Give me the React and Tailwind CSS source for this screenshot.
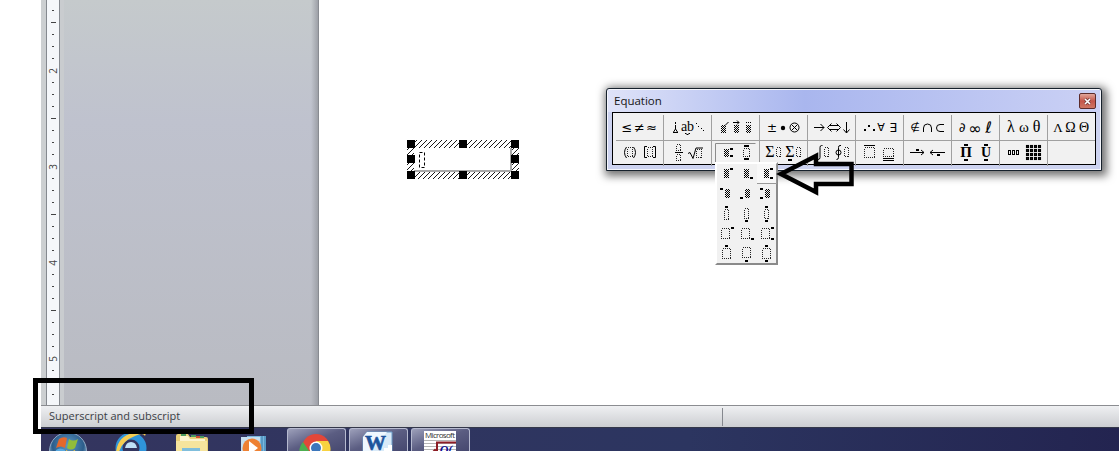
const ticks = Array.from({ length: 34 }, (_, i) => 10 + i * 12);

const mathFont = { fontFamily: '"Liberation Serif", "DejaVu Sans", serif' };
const symFont = { fontFamily: '"DejaVu Sans", sans-serif' };

function Defs() {
  return (
    <svg width="0" height="0" className="absolute">
      <defs>
        <pattern id="checker" width="2" height="2" patternUnits="userSpaceOnUse">
          <rect width="2" height="2" fill="#f0f0f0" />
          <rect width="1" height="1" fill="#000" />
          <rect x="1" y="1" width="1" height="1" fill="#000" />
        </pattern>
        <pattern id="hatch" width="5" height="5" patternUnits="userSpaceOnUse">
          <rect width="5" height="5" fill="#fff" />
          <path d="M-1 1L1 -1M0 5L5 0M4 6L6 4" stroke="#000" strokeWidth="0.9" />
        </pattern>
      </defs>
    </svg>
  );
}

// dotted placeholder slot
function Slot({ x, y, w = 5, h = 9 }) {
  return (
    <rect
      x={x + 0.5}
      y={y + 0.5}
      width={w}
      height={h}
      fill="none"
      stroke="#222"
      strokeDasharray="1 1"
      shapeRendering="crispEdges"
    />
  );
}

function Solid({ x, y, w = 5, h = 8 }) {
  return <rect x={x} y={y} width={w} height={h} fill="url(#checker)" shapeRendering="crispEdges" />;
}

function Dot({ x, y, w = 3, h = 2 }) {
  return <rect x={x} y={y} width={w} height={h} fill="#000" shapeRendering="crispEdges" />;
}

function Sym({ x, y = 17, size = 13, font = symFont, bold, children }) {
  return (
    <text x={x} y={y} fontSize={size} textAnchor="middle" fill="#000" fontWeight={bold ? 700 : 400} style={font}>
      {children}
    </text>
  );
}

function Line({ d, w = 1 }) {
  return <path d={d} fill="none" stroke="#000" strokeWidth={w} />;
}

const topRow = [
  <>
    <Sym x={11}>≤</Sym>
    <Sym x={23.5}>≠</Sym>
    <Sym x={35.5}>≈</Sym>
  </>,
  <>
    <Line d="M11.5 7v2M11.5 10v4M9 17.5h5M9.5 17l2-3l2 3" />
    <Sym x={23.5} y={16} size={14} font={mathFont}>ab</Sym>
    <Line d="M21 18.5h1.5M22.5 19.5h2M24.5 18.5h1.5" />
    <Dot x={32} y={8} w={1} h={1} />
    <Dot x={34} y={11} w={1} h={1} />
    <Dot x={37} y={13} w={1} h={1} />
    <Dot x={39} y={15} w={1} h={1} />
  </>,
  <>
    <Solid x={9} y={10} />
    <Line d="M13 10.5l3.5-3.5" />
    <Solid x={22} y={10} />
    <Line d="M21 7.5h6M25 5.5l2 2l-2 2" />
    <Solid x={34} y={10} />
    <Dot x={34} y={7} w={1} h={1} />
    <Dot x={36} y={7} w={1} h={1} />
    <Dot x={38} y={7} w={1} h={1} />
  </>,
  <>
    <Sym x={12} size={12}>±</Sym>
    <circle cx="23" cy="13" r="2.2" />
    <circle cx="34.5" cy="12.5" r="4.5" fill="none" stroke="#000" />
    <Line d="M31.5 9.5l6 6M37.5 9.5l-6 6" />
  </>,
  <>
    <Line d="M6 12.5h10M12.5 9l3.5 3.5l-3.5 3.5" />
    <Line d="M22 10.5h8M22 14.5h8M23.5 8.5l-4 4l4 4M28.5 8.5l4 4l-4 4" />
    <Line d="M38.5 7v11M35.5 14.5l3 3.5l3-3.5" />
  </>,
  <>
    <Dot x={8} y={14} w={2} />
    <Dot x={12} y={10} w={2} />
    <Dot x={17} y={14} w={2} />
    <Sym x={25} size={11} y={16}>∀</Sym>
    <Sym x={37} size={12} y={17}>∃</Sym>
  </>,
  <>
    <Sym x={11} size={11} y={16}>∉</Sym>
    <Line d="M19.5 17v-4a4 4 0 0 1 8 0v4" />
    <Line d="M40 9.5h-4a3.5 3.5 0 0 0 0 7h4" />
  </>,
  <>
    <Sym x={10} size={13}>∂</Sym>
    <Sym x={23} size={16} y={19}>∞</Sym>
    <Sym x={36.5} size={16} y={18}>ℓ</Sym>
  </>,
  <>
    <Sym x={11} size={16} font={mathFont}>λ</Sym>
    <Sym x={24} size={15} font={mathFont}>ω</Sym>
    <Sym x={36.5} size={16} font={mathFont}>θ</Sym>
  </>,
  <>
    <Sym x={10} size={13} font={mathFont}>Λ</Sym>
    <Sym x={22.5} size={14} font={mathFont}>Ω</Sym>
    <Sym x={36} size={14} font={mathFont}>Θ</Sym>
  </>,
];

const bottomRow = [
  <>
    <Line d="M10.5 6q-4 5.5 0 11M17.5 6q4 5.5 0 11" />
    <Slot x={11} y={6} w={5} h={9} />
    <Line d="M31 5.5h-2.5v11h2.5M37 5.5h2.5v11h-2.5" />
    <Slot x={31} y={6} w={5} h={9} />
  </>,
  <>
    <Slot x={12} y={3} w={4} h={6} />
    <Line d="M11 11.5h8" />
    <Slot x={12} y={13} w={4} h={6} />
    <Line d="M24 12.5l2-1l3 6l3-10.5h7" />
    <Slot x={32} y={8} w={5} h={8} />
  </>,
  <>
    <Solid x={12} y={8} />
    <Dot x={18} y={7} />
    <Dot x={18} y={14} />
    <Slot x={31} y={7} w={6} h={8} />
    <Dot x={32} y={4} w={5} />
    <Dot x={32} y={17} w={5} />
  </>,
  <>
    <Sym x={10} y={16} size={16} font={mathFont}>Σ</Sym>
    <Slot x={16} y={6} w={4} h={9} />
    <Sym x={30} y={16} size={16} font={mathFont}>Σ</Sym>
    <Dot x={28} y={18} w={4} />
    <Slot x={36} y={6} w={4} h={9} />
  </>,
  <>
    <Line d="M14.5 4.5h-1q-1.5 0-1.5 2v10q0 2-2 2" />
    <Slot x={16} y={6} w={4} h={9} />
    <Line d="M33 4.5h-1q-1.5 0-1.5 2v10q0 2-2 2" />
    <circle cx="30.5" cy="11.5" r="2.5" fill="none" stroke="#000" />
    <Slot x={36} y={6} w={4} h={9} />
  </>,
  <>
    <Line d="M8 4.5h11" />
    <Slot x={8} y={6} w={10} h={10} />
    <Slot x={27} y={7} w={10} h={8} />
    <Line d="M27 17.5h11M27 19.5h11" />
  </>,
  <>
    <Line d="M6 11.5h14M17 9l3 2.5l-3 2.5" />
    <Dot x={12} y={8} w={3} />
    <Line d="M26 11.5h15M29 9l-3 2.5l3 2.5" />
    <Dot x={33} y={13} w={3} />
  </>,
  <>
    <Sym x={14} y={16} size={15} bold font={mathFont}>Π</Sym>
    <Dot x={12} y={3} w={4} />
    <Dot x={12} y={18} w={4} />
    <Sym x={34} y={16} size={14} bold font={mathFont}>U</Sym>
    <Dot x={32} y={3} w={4} />
    <Dot x={32} y={18} w={4} />
  </>,
  <>
    {[8, 12, 16].map((x) => (
      <rect key={x} x={x + 0.5} y="9.5" width="2" height="4" fill="none" stroke="#000" />
    ))}
    {[0, 1, 2, 3].map((r) =>
      [0, 1, 2, 3].map((c) => (
        <rect
          key={`${r}${c}`}
          x={26.5 + c * 4}
          y={4.5 + r * 4}
          width="2"
          height="2"
          fill="none"
          stroke="#000"
          strokeWidth="1.1"
        />
      ))
    )}
  </>,
  null,
];

const scripts = [
  <><Solid x={6} y={6} h={9} /><Dot x={12} y={5} /></>,
  <><Solid x={6} y={6} h={9} /><Dot x={12} y={14} /></>,
  <><Solid x={6} y={6} h={9} /><Dot x={12} y={5} /><Dot x={12} y={14} /></>,
  <><Solid x={7} y={6} h={9} /><Dot x={2} y={5} /></>,
  <><Solid x={7} y={6} h={9} /><Dot x={2} y={14} /></>,
  <><Solid x={7} y={6} h={9} /><Dot x={2} y={5} /><Dot x={2} y={14} /></>,
  <><Slot x={6} y={6} w={4} h={10} /><Dot x={7} y={3} /></>,
  <><Slot x={6} y={5} w={4} h={10} /><Dot x={7} y={17} /></>,
  <><Slot x={6} y={6} w={4} h={9} /><Dot x={7} y={3} /><Dot x={7} y={17} /></>,
  <><Slot x={3} y={5} w={8} h={10} /><Dot x={13} y={4} /></>,
  <><Slot x={3} y={5} w={8} h={10} /><Dot x={13} y={15} /></>,
  <><Slot x={3} y={5} w={8} h={10} /><Dot x={13} y={4} /><Dot x={13} y={15} /></>,
  <><Slot x={4} y={5} w={8} h={10} /><Dot x={7} y={2} /></>,
  <><Slot x={4} y={4} w={8} h={10} /><Dot x={7} y={17} /></>,
  <><Slot x={4} y={5} w={8} h={10} /><Dot x={7} y={2} /><Dot x={7} y={17} /></>,
];

function Ruler() {
  return (
    <div className="flex w-[19px] shrink-0 bg-[#cccfd1]">
      <svg width="19" height="405">
        <rect x="5" width="14" height="405" fill="#f5f7fa" />
        <path d="M5.5 0v405M18.5 0v405" stroke="#85898f" />
        {ticks.map((y, i) => {
          if (i % 8 === 5) {
            return (
              <text
                key={y}
                transform={`translate(16 ${y + 1}) rotate(-90)`}
                fontSize="10"
                textAnchor="middle"
                fill="#444"
                className="font-['Open_Sans',sans-serif]"
              >
                {2 + (i - 5) / 8}
              </text>
            );
          }
          const long = i % 8 === 1;
          return <rect key={y} x={long ? 10 : 11} y={y} width={long ? 5 : 2} height="1" fill="#444" />;
        })}
      </svg>
    </div>
  );
}

function EquationObject() {
  const handles = [
    [0, 0], [52, 0], [104, 0],
    [0, 15], [104, 15],
    [0, 31], [52, 31], [104, 31],
  ];
  return (
    <svg width="112" height="39" className="absolute left-[407px] top-[140px]">
      <rect width="112" height="39" fill="url(#hatch)" />
      <rect x="7" y="8" width="98" height="23" fill="#fff" />
      <path d="M104 8v24M7 31h98" stroke="#a9a9a9" strokeWidth="2" />
      <rect x="12.5" y="12.5" width="5" height="15" fill="none" stroke="#000" strokeDasharray="3 2" />
      {handles.map(([x, y]) => (
        <rect key={`${x}-${y}`} x={x} y={y} width="8" height="8" fill="#000" />
      ))}
    </svg>
  );
}

function ToolRow({ items, active }) {
  return (
    <div className="flex h-[25px]">
      {items.map((item, i) => (
        <div
          key={i}
          className={`flex h-[25px] w-12 shrink-0 ${i < 9 ? 'border-r border-[#a0a0a0]' : ''}`}
        >
          <svg width="47" height="24" className="shrink-0">
            {active === i && <path d="M3.5 24V2.5h40" fill="none" stroke="#8c8c8c" />}
            {item}
          </svg>
        </div>
      ))}
    </div>
  );
}

function EquationWindow() {
  return (
    <div className="absolute left-[606px] top-[88px] flex h-[83px] w-[496px] flex-col rounded-t-[3px] border border-[#16212c] bg-[#cdd3f0] px-[5px] shadow-[2px_2px_9px_3px_rgba(0,0,0,0.55)] inset-ring inset-ring-white/80">
      <div className="-mx-1 mt-px flex h-[22px] shrink-0 items-center justify-between bg-linear-to-r from-[#dfe3f8] via-[#a9b6ee] via-40% to-[#cbd1f5] pl-1.5 pr-1">
        <span className="font-['Open_Sans',sans-serif] text-[11.5px] leading-none text-[#151515]">Equation</span>
        <div className="flex h-4 w-[17px] items-center justify-center rounded-[2px] border border-[#5c2b2b] bg-linear-to-b from-[#e0a69c] via-[#c4554a] via-50% to-[#cf7664]">
          <svg width="7" height="7" viewBox="0 0 7 7">
            <path d="M1 1l5 5M6 1l-5 5" stroke="#713737" strokeWidth="3" />
            <path d="M1 1l5 5M6 1l-5 5" stroke="#fff" strokeWidth="1.6" />
          </svg>
        </div>
      </div>
      <div className="flex h-[53px] flex-col border border-black bg-[#f1f1f1] pl-[3px] pt-[2px]">
        <div className="border-b border-[#a0a0a0]">
          <ToolRow items={topRow} />
        </div>
        <ToolRow items={bottomRow} active={2} />
      </div>
    </div>
  );
}

function ScriptMenu() {
  return (
    <div className="absolute left-[715px] top-[162px] grid h-[103px] w-[63px] grid-cols-[repeat(3,20px)] content-start border-2 border-b-[#8a8a8a] border-l-white border-r-[#8a8a8a] border-t-white bg-[#f1f1f1]">
      {scripts.map((item, i) => (
        <div key={i} className={`h-5 w-5 ${i === 2 ? 'border-b border-r border-[#999] bg-[#f7f7f7]' : ''}`}>
          <svg width="19" height="20" viewBox="-1 1 19 20">{item}</svg>
        </div>
      ))}
    </div>
  );
}

function TaskButton({ children }) {
  return (
    <div className="h-[23px] w-[59px] overflow-hidden rounded-t-[3px] border border-b-0 border-[#b6bad0] bg-linear-to-br from-[#9da0ba] via-[#5b5d82] via-50% to-[#46486f]">
      {children}
    </div>
  );
}

function Taskbar() {
  return (
    <div className="ml-[41px] flex h-[23px] overflow-hidden bg-linear-to-r from-[#34355f] via-[#2c3560] via-60% to-[#232450]">
      <svg width="246" height="23" className="shrink-0">
        <defs>
          <radialGradient id="orb" cx="50%" cy="35%" r="60%">
            <stop offset="0" stopColor="#5e9ac4" />
            <stop offset="0.7" stopColor="#2c5d8b" />
            <stop offset="1" stopColor="#91b5d1" />
          </radialGradient>
        </defs>
        <circle cx="27" cy="23" r="18.5" fill="url(#orb)" stroke="#8fa9c4" />
        <path d="M18 11q4-3 8-1l-2 10q-4-3-9 0z" fill="#e4682c" />
        <path d="M28 11q4 3 9 0l-3 9q-4 3-8 0z" fill="#91bd3a" />
        <path d="M15 22q4-3 9 0v4h-10z" fill="#59a9e0" />
        <path d="M25 22q4 3 9 0v4h-9z" fill="#f4c536" />
        <circle cx="90" cy="20" r="12" fill="none" stroke="#2f94da" strokeWidth="7" />
        <path d="M84 20q1-6 6-6t6 6z" fill="#bfe1f6" />
        <path d="M75 24Q77 8 92 5Q103 1 105 5L104 8Q102 4 94 8Q81 13 78 24Z" fill="#f6cd51" />
        <path d="M135 23V8q0-2 2-2h10l2 3h16q2 0 2 2v12z" fill="#e8cf78" />
        <path d="M139 8h8l2 3h15v3h-25z" fill="#fbf3cf" />
        <path d="M140 7h5M150 8h5M158 9h5" stroke="#4b9b60" strokeWidth="2" />
        <path d="M155 9h4" stroke="#d05033" strokeWidth="2" />
        <path d="M135 13h31v10h-31z" fill="#f6e49d" />
        <path d="M141 20h18v3h-18z" fill="#80bedc" />
        <path d="M206 8h19v15h-19z" fill="#7bb8de" />
        <path d="M200 9h19v14h-19z" fill="#c6dff0" />
        <path d="M221 8v15M224 8v15" stroke="#367cad" />
        <circle cx="211" cy="20" r="9.5" fill="#ee8133" />
        <path d="M208 13l9 7l-9 7z" fill="#fff" />
      </svg>
      <div className="flex gap-[3px]">
        <TaskButton>
          <svg width="57" height="23">
            <circle cx="28" cy="19" r="14" fill="#e34739" />
            <path d="M15 13l9 13h-12a14 14 0 0 1 3-13z" fill="#4cae50" />
            <path d="M28 12h12a14 14 0 0 1 1 14h-10z" fill="#f8d240" />
            <circle cx="28" cy="19" r="6.5" fill="#fff" />
            <circle cx="28" cy="19" r="5" fill="#3c77bb" />
          </svg>
        </TaskButton>
        <TaskButton>
          <svg width="57" height="23">
            <path d="M17 3h25v20H13V8z" fill="#d9eaf8" stroke="#6a9bc8" />
            <path d="M13 8l4-5h20L20 23h-7z" fill="#eff8ff" />
            <text
              x="15"
              y="21"
              fontSize="20"
              fontWeight="700"
              textLength="21"
              lengthAdjust="spacingAndGlyphs"
              fill="#1d549c"
              stroke="#1d549c"
              strokeWidth="0.6"
              style={mathFont}
            >
              W
            </text>
            <path d="M34 19h4v-3h4v7h-8z" fill="#fff" />
          </svg>
        </TaskButton>
        <TaskButton>
          <svg width="57" height="23">
            <rect x="12" y="2" width="32" height="21" fill="#fff" />
            <path d="M12 11.5h32M12 14.5h32M12 17.5h32M12 20.5h32" stroke="#b5b5b5" />
            <text x="28" y="9" fontSize="8" textLength="30" textAnchor="middle" fill="#333" className="font-['Open_Sans',sans-serif]">
              Microsoft
            </text>
            <path d="M21 23l2-2l2 2M25 23V13.5h19" fill="none" stroke="#8c1c24" strokeWidth="2" />
            <text x="34" y="25" fontSize="12" fontWeight="700" fontStyle="italic" textAnchor="middle" fill="#101090" style={mathFont}>
              Q(
            </text>
          </svg>
        </TaskButton>
      </div>
    </div>
  );
}

export default function App() {
  return (
    <div className="relative flex h-[451px] w-[1119px] flex-col overflow-hidden bg-white">
      <Defs />
      <div className="flex h-[405px] pl-[41px]">
        <Ruler />
        <div className="flex w-[259px] bg-linear-to-b from-[#c5cacc] via-[#bfc2ce] via-30% to-[#b9bbc2]">
          <div className="w-1 bg-[#c9cccf]" />
          <div className="flex-1" />
          <div className="w-2 border-r border-[#888b91] bg-linear-to-r from-transparent to-[#9da0a7]" />
        </div>
      </div>
      <div className="ml-[41px] flex h-[23px] items-center border-b border-t border-b-[#34384a] border-t-[#8b8d91] bg-linear-to-b from-[#eff0f2] to-[#ccced2]">
        <span className="w-[681px] pb-0.5 pl-2 font-['Open_Sans',sans-serif] text-[11px] leading-none text-[#3b3e45]">
          Superscript and subscript
        </span>
        <div className="h-[18px] w-px bg-[#85888e]" />
      </div>
      <Taskbar />
      <EquationObject />
      <EquationWindow />
      <ScriptMenu />
      <svg width="82" height="46" className="absolute left-[775px] top-[151px]">
        <path d="M6 23L41 5v8h35.5v20H41v8z" fill="none" stroke="#000" strokeWidth="4.5" />
      </svg>
      <div className="absolute left-[33px] top-[378px] h-[56px] w-[221px] border-[5px] border-black" />
    </div>
  );
}
